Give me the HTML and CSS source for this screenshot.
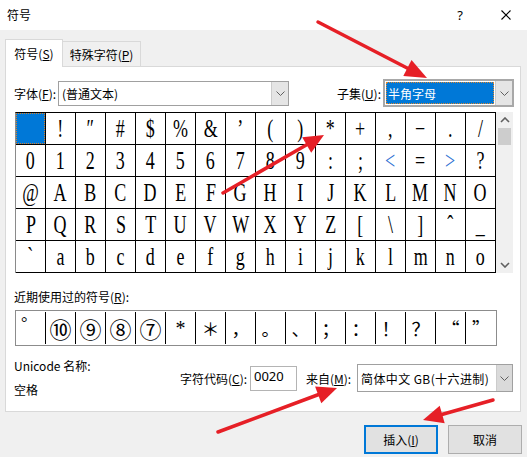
FILE: index.html
```html
<!DOCTYPE html>
<html lang="zh-CN">
<head>
<meta charset="utf-8">
<title>符号</title>
<link rel="stylesheet" href="styles.css">
</head>
<body>
<div class="titlebar">
  <span class="title">符号</span>
  <span class="help">?</span>
  <svg class="close" viewBox="0 0 10 10"><path d="M0.5 0.5 L9.5 9.5 M9.5 0.5 L0.5 9.5" stroke="#000" stroke-width="1.1" fill="none"/></svg>
</div>
<div class="main">
  <div class="tabs">
    <div class="tab active">符号(<u>S</u>)</div>
    <div class="tab">特殊字符(<u>P</u>)</div>
  </div>
  <div class="panel">
    <div class="fontrow">
      <span class="lbl-font">字体(<u>F</u>):</span>
      <div class="combo font-combo">
        <span class="text">(普通文本)</span>
        <span class="dd"><svg width="9" height="5" viewBox="0 0 9 5"><polyline points="0.5,0.5 4.5,4.5 8.5,0.5" fill="none" stroke="#606060" stroke-width="1"/></svg></span>
      </div>
      <span class="lbl-subset">子集(<u>U</u>):</span>
      <div class="combo subset">
        <span class="text">半角字母</span>
        <span class="dd"><svg width="9" height="5" viewBox="0 0 9 5"><polyline points="0.5,0.5 4.5,4.5 8.5,0.5" fill="none" stroke="#606060" stroke-width="1"/></svg></span>
      </div>
    </div>
    <div class="gridwrap">
      <div class="grid">
        <div class="cell"><div class="sel"></div></div>
        <div class="cell"><span>!</span></div>
        <div class="cell"><span>″</span></div>
        <div class="cell"><span>#</span></div>
        <div class="cell"><span>$</span></div>
        <div class="cell"><span>%</span></div>
        <div class="cell"><span>&amp;</span></div>
        <div class="cell"><span>’</span></div>
        <div class="cell"><span>(</span></div>
        <div class="cell"><span>)</span></div>
        <div class="cell"><span>*</span></div>
        <div class="cell"><span>+</span></div>
        <div class="cell"><span>,</span></div>
        <div class="cell"><span>−</span></div>
        <div class="cell"><span>.</span></div>
        <div class="cell"><span>/</span></div>

        <div class="cell"><span>0</span></div>
        <div class="cell"><span>1</span></div>
        <div class="cell"><span>2</span></div>
        <div class="cell"><span>3</span></div>
        <div class="cell"><span>4</span></div>
        <div class="cell"><span>5</span></div>
        <div class="cell"><span>6</span></div>
        <div class="cell"><span>7</span></div>
        <div class="cell"><span>8</span></div>
        <div class="cell"><span>9</span></div>
        <div class="cell"><span>:</span></div>
        <div class="cell"><span>;</span></div>
        <div class="cell blue"><span>&lt;</span></div>
        <div class="cell"><span>=</span></div>
        <div class="cell blue"><span>&gt;</span></div>
        <div class="cell"><span>?</span></div>

        <div class="cell"><span>@</span></div>
        <div class="cell"><span>A</span></div>
        <div class="cell"><span>B</span></div>
        <div class="cell"><span>C</span></div>
        <div class="cell"><span>D</span></div>
        <div class="cell"><span>E</span></div>
        <div class="cell"><span>F</span></div>
        <div class="cell"><span>G</span></div>
        <div class="cell"><span>H</span></div>
        <div class="cell"><span>I</span></div>
        <div class="cell"><span>J</span></div>
        <div class="cell"><span>K</span></div>
        <div class="cell"><span>L</span></div>
        <div class="cell"><span>M</span></div>
        <div class="cell"><span>N</span></div>
        <div class="cell"><span>O</span></div>

        <div class="cell"><span>P</span></div>
        <div class="cell"><span>Q</span></div>
        <div class="cell"><span>R</span></div>
        <div class="cell"><span>S</span></div>
        <div class="cell"><span>T</span></div>
        <div class="cell"><span>U</span></div>
        <div class="cell"><span>V</span></div>
        <div class="cell"><span>W</span></div>
        <div class="cell"><span>X</span></div>
        <div class="cell"><span>Y</span></div>
        <div class="cell"><span>Z</span></div>
        <div class="cell"><span>[</span></div>
        <div class="cell"><span>\</span></div>
        <div class="cell"><span>]</span></div>
        <div class="cell"><span>ˆ</span></div>
        <div class="cell"><span>_</span></div>

        <div class="cell"><span>`</span></div>
        <div class="cell"><span>a</span></div>
        <div class="cell"><span>b</span></div>
        <div class="cell"><span>c</span></div>
        <div class="cell"><span>d</span></div>
        <div class="cell"><span>e</span></div>
        <div class="cell"><span>f</span></div>
        <div class="cell"><span>g</span></div>
        <div class="cell"><span>h</span></div>
        <div class="cell"><span>i</span></div>
        <div class="cell"><span>j</span></div>
        <div class="cell"><span>k</span></div>
        <div class="cell"><span>l</span></div>
        <div class="cell"><span>m</span></div>
        <div class="cell"><span>n</span></div>
        <div class="cell"><span>o</span></div>
      </div>
      <div class="scroll">
        <div class="sbtn"><svg width="10" height="6" viewBox="0 0 10 6"><polyline points="1,5 5,1 9,5" fill="none" stroke="#606060" stroke-width="1.6"/></svg></div>
        <div class="thumb"></div>
        <div class="sfill"></div>
        <div class="sbtn"><svg width="10" height="6" viewBox="0 0 10 6"><polyline points="1,1 5,5 9,1" fill="none" stroke="#606060" stroke-width="1.6"/></svg></div>
      </div>
    </div>

    <div class="recent-label">近期使用过的符号(<u>R</u>):</div>
    <div class="recent">
      <div class="rc top">°</div>
      <div class="rc circ">⑩</div>
      <div class="rc circ">⑨</div>
      <div class="rc circ">⑧</div>
      <div class="rc circ">⑦</div>
      <div class="rc">*</div>
      <div class="rc cjk">＊</div>
      <div class="rc cjk">，</div>
      <div class="rc cjk">。</div>
      <div class="rc cjk">、</div>
      <div class="rc cjk">；</div>
      <div class="rc cjk">：</div>
      <div class="rc cjk">！</div>
      <div class="rc cjk">？</div>
      <div class="rc cjk">“</div>
      <div class="rc cjk last">”</div>
    </div>

    <div class="bottom">
      <div class="uni">
        <div class="uni-title">Unicode 名称:</div>
        <div class="uni-name">空格</div>
      </div>
      <div class="codes">
        <span class="lbl-code">字符代码(<u>C</u>):</span>
        <div class="codebox">0020</div>
        <span class="lbl-from">来自(<u>M</u>):</span>
        <div class="combo from-combo">
          <span class="text">简体中文 GB(十六进制)</span>
          <span class="dd"><svg width="9" height="5" viewBox="0 0 9 5"><polyline points="0.5,0.5 4.5,4.5 8.5,0.5" fill="none" stroke="#606060" stroke-width="1"/></svg></span>
        </div>
      </div>
    </div>
  </div>
  <div class="buttons">
    <div class="btn default">插入(<u>I</u>)</div>
    <div class="btn">取消</div>
  </div>
</div>

<svg class="arrows" width="527" height="457" viewBox="0 0 527 457">
  <g stroke="#e61f26" stroke-width="3.5" stroke-linecap="round" fill="none">
    <line x1="318" y1="22" x2="409" y2="69"/>
    <line x1="223" y1="193" x2="308" y2="144"/>
    <line x1="218" y1="432" x2="320" y2="394"/>
    <line x1="493" y1="400" x2="440" y2="415"/>
  </g>
  <g fill="#e61f26">
    <polygon points="427,78 403.3,75.9 411.5,59.9"/>
    <polygon points="324,135 311.2,152.8 302.2,137.2"/>
    <polygon points="337,388 321.3,403.3 315.1,386.5"/>
    <polygon points="423,420 439.7,405.8 444.7,423.2"/>
  </g>
</svg>
</body>
</html>
```

FILE: styles.css
```css
* {
  box-sizing: border-box;
}

html, body {
  margin: 0;
  padding: 0;
}

body {
  width: 527px;
  height: 457px;
  overflow: hidden;
  position: relative;
  background: #f0f0f0;
  color: #000;
  font-family: "Noto Sans CJK SC", "Noto Sans", sans-serif;
  font-size: 12px;
}

u {
  text-decoration: underline;
  text-underline-offset: 1px;
}

/* title bar */
.titlebar {
  height: 30px;
  background: #fff;
  display: flex;
  align-items: center;
  padding: 0 16px 0 7px;
}

.title {
  flex: 1;
  line-height: 16px;
}

.help {
  font-family: "Noto Sans", sans-serif;
  font-size: 13px;
  margin-right: 38px;
  line-height: 16px;
}

.close {
  width: 10px;
  height: 10px;
  display: block;
}

/* main */
.main {
  padding: 9px 6px 0 5px;
}

.tabs {
  display: flex;
  align-items: flex-end;
  height: 27px;
  position: relative;
  z-index: 1;
}

.tab {
  width: 78px;
  height: 25px;
  border: 1px solid #d9d9d9;
  border-left: none;
  border-bottom: none;
  background: #f0f0f0;
  display: flex;
  align-items: center;
  justify-content: center;
}

.tab.active {
  width: 58px;
  height: 28px;
  margin-bottom: -1px;
  background: #fff;
  border-left: 1px solid #d9d9d9;
}

.panel {
  width: 516px;
  height: 346px;
  border: 1px solid #d9d9d9;
  background: #fff;
  padding: 12px 6px 0 8px;
}

.fontrow {
  display: flex;
  align-items: center;
  height: 28px;
}

.lbl-font {
  width: 44px;
}

.combo {
  display: flex;
  height: 25px;
  border: 1px solid #a0a0a0;
  background: #fff;
}

.combo .text {
  flex: 1;
  padding-left: 3px;
  display: flex;
  align-items: center;
  white-space: nowrap;
}

.combo .dd {
  width: 17px;
  background: #e5e5e5;
  border-left: 1px solid #cccccc;
  display: flex;
  align-items: center;
  justify-content: center;
}

.font-combo {
  width: 231px;
}

.lbl-subset {
  margin-left: auto;
  margin-right: 2px;
}

.subset {
  width: 131px;
  height: 28px;
  border: 2px solid #a8a8a8;
}

.subset .text {
  margin: 1px;
  padding-left: 2px;
  background: #0078d7;
  color: #fff;
  outline: 1px dotted #e0892e;
  outline-offset: -1px;
}

.subset .dd {
  width: 17px;
}

/* symbol grid */
.gridwrap {
  display: flex;
  margin: 5px 0 0 1px;
}

.grid {
  display: grid;
  grid-template-columns: repeat(16, 30px);
  grid-auto-rows: 32px;
  width: 481px;
  border-top: 1px solid #000;
  border-left: 1px solid #8a8a8a;
}

.cell {
  border-right: 1px solid #000;
  border-bottom: 1px solid #000;
  text-align: center;
  padding-top: 1px;
  line-height: 30px;
  font-family: "Liberation Serif", "DejaVu Serif", serif;
  font-size: 25px;
}

.cell span {
  display: inline-block;
  transform: scaleX(0.72);
}

.cell.blue {
  color: #2d6fd2;
}

.sel {
  height: 31px;
  margin-top: -1px;
  background: #0078d7;
  border: 1px dotted #d9822b;
}

.scroll {
  width: 17px;
  height: 161px;
  background: #f0f0f0;
  display: flex;
  flex-direction: column;
}

.sbtn {
  height: 16px;
  display: flex;
  align-items: center;
  justify-content: center;
}

.thumb {
  height: 17px;
  margin: 0 2px;
  background: #cdcdcd;
}

.sfill {
  flex: 1;
}

/* recent */
.recent-label {
  margin-top: 16px;
  line-height: 16px;
}

.recent {
  display: flex;
  width: 482px;
  height: 36px;
  margin: 5px 0 0 1px;
  border: 1px solid #8c8c8c;
}

.rc {
  width: 30px;
  border-right: 1px solid #000;
  margin: 1px 0;
  display: flex;
  align-items: center;
  justify-content: center;
  font-family: "Liberation Serif", "Noto Sans CJK SC", serif;
  font-size: 20px;
}

.rc.top {
  align-items: flex-start;
  justify-content: flex-start;
  padding: 2px 0 0 5px;
  font-size: 16px;
}

.rc.circ {
  font-family: "Noto Sans CJK SC", serif;
  font-size: 22px;
}

.rc.cjk {
  font-family: "Noto Sans CJK SC", sans-serif;
  font-size: 18px;
}

.rc.last {
  flex: 1;
  border-right: none;
}

/* bottom */
.bottom {
  display: flex;
  margin-top: 12px;
}

.uni {
  line-height: 16px;
}

.uni-name {
  margin-top: 8px;
}

.codes {
  margin: 6px 1px 0 auto;
  display: flex;
  align-items: center;
  height: 28px;
}

.lbl-code {
  width: 70px;
  white-space: nowrap;
}

.codebox {
  width: 47px;
  height: 25px;
  border: 1px solid #b4b4b4;
  padding: 1px 0 0 3px;
  line-height: 16px;
  font-size: 13px;
  font-family: "Noto Sans", sans-serif;
}

.lbl-from {
  margin-left: 9px;
  width: 51px;
  white-space: nowrap;
}

.from-combo {
  width: 156px;
  height: 28px;
}

.from-combo .text {
  letter-spacing: 0.4px;
}

.from-combo .dd {
  width: 16px;
  background: #dadada;
}

/* buttons */
.buttons {
  display: flex;
  justify-content: flex-end;
  gap: 10px;
  margin: 13px -1px 0 0;
}

.btn {
  width: 74px;
  height: 29px;
  background: #e1e1e1;
  border: 1px solid #adadad;
  display: flex;
  align-items: center;
  justify-content: center;
}

.btn.default {
  border: 2px solid #0078d7;
}

/* annotation arrows */
.arrows {
  position: absolute;
  left: 0;
  top: 0;
  pointer-events: none;
}
```
